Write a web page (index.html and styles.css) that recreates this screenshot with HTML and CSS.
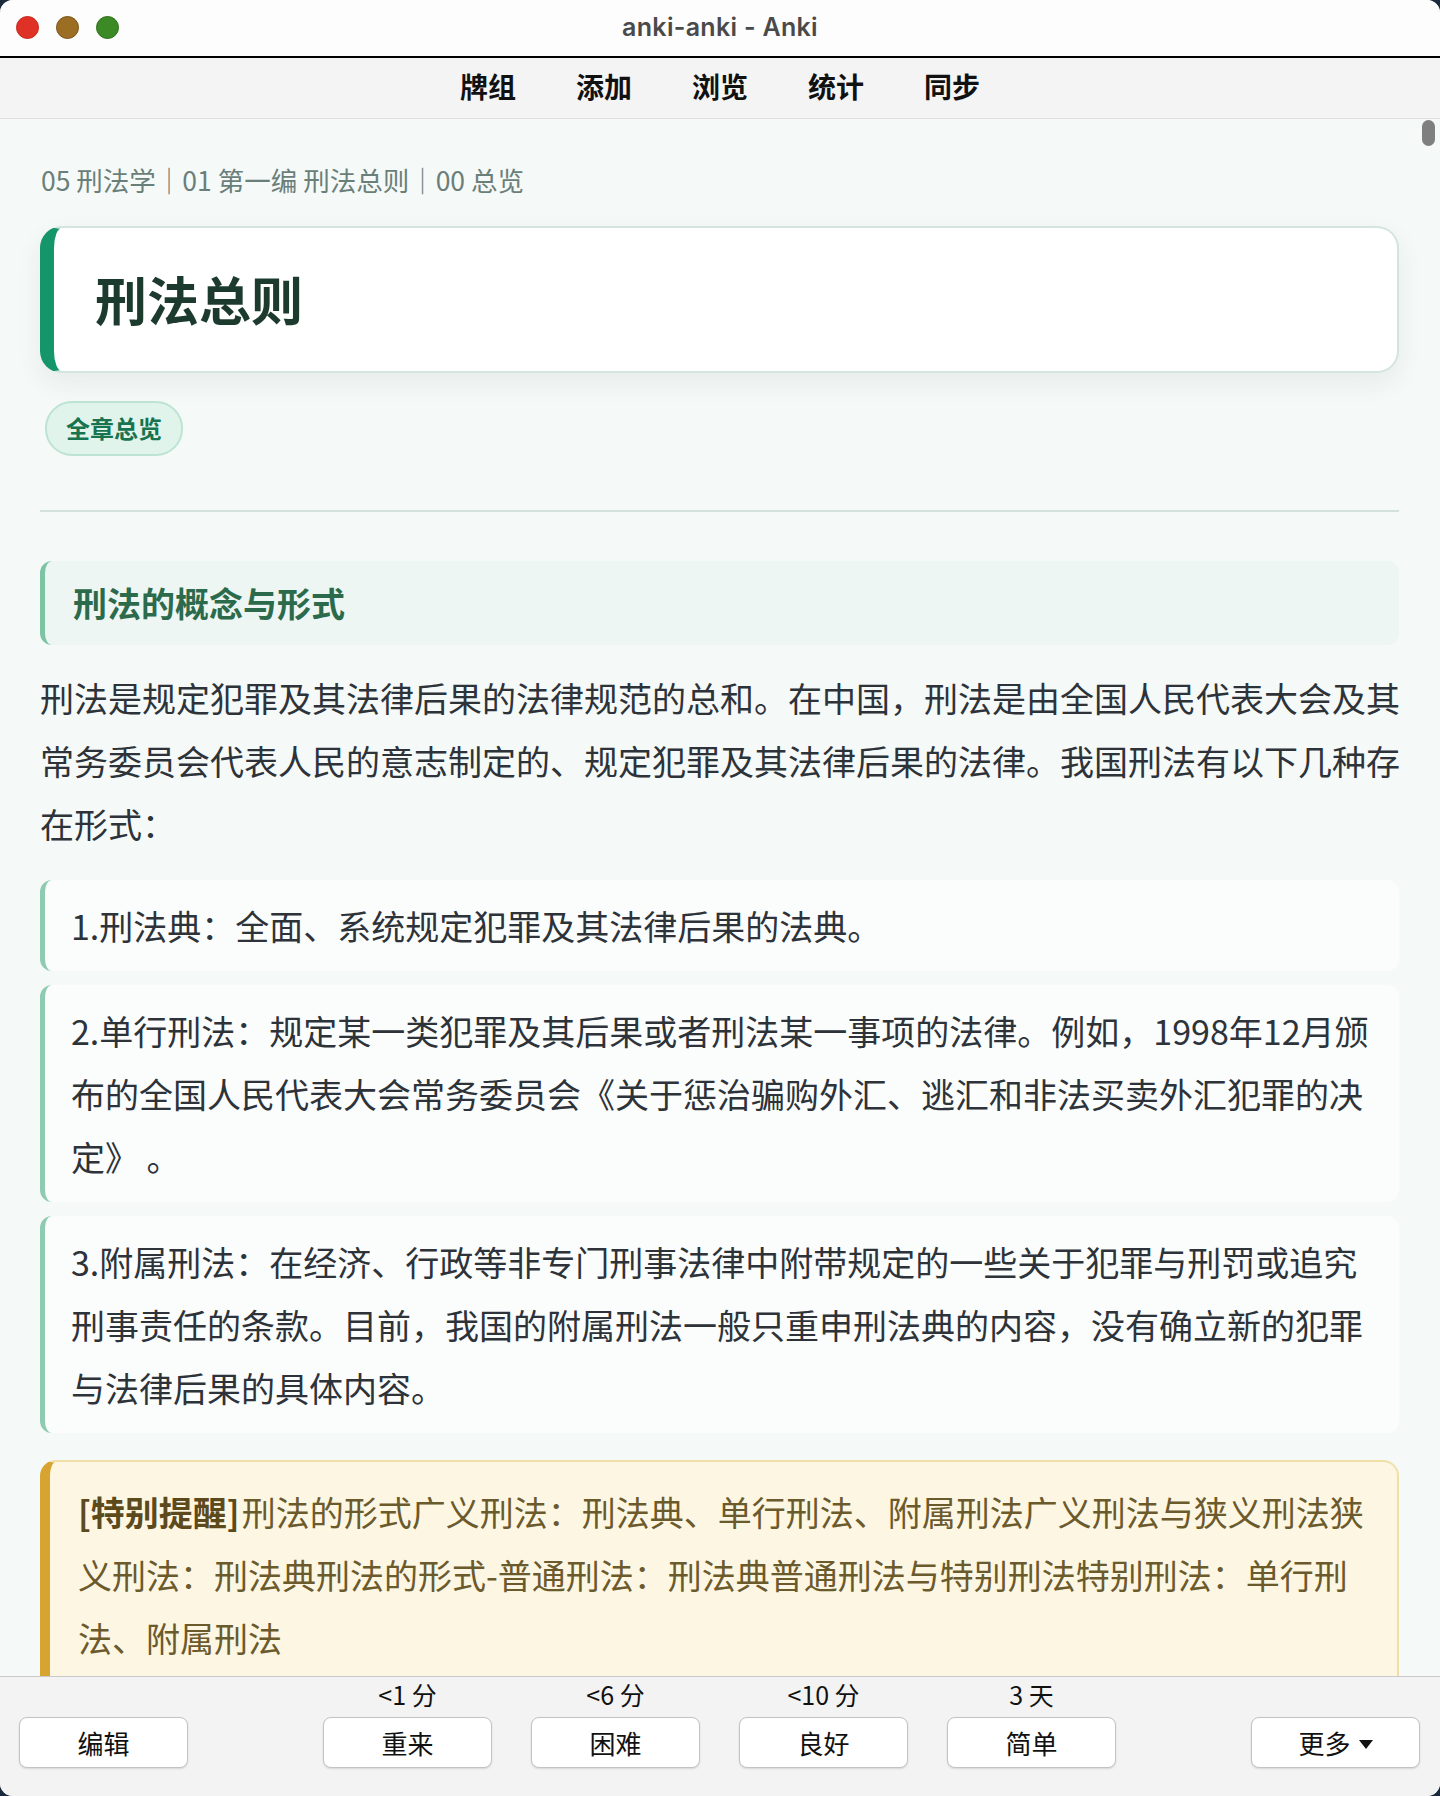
FILE: index.html
```html
<!DOCTYPE html>
<html lang="zh-CN">
<head>
    <meta charset="UTF-8">
    <meta name="viewport" content="width=device-width, initial-scale=1.0">
    <title>anki-anki - Anki</title>
    <link rel="stylesheet" href="styles.css">
</head>
<body>
    <div class="window">
        <header class="titlebar">
            <div class="lights">
                <span class="light red"></span>
                <span class="light yellow"></span>
                <span class="light green"></span>
            </div>
            <div class="wintitle">anki-anki - Anki</div>
            <div></div>
        </header>

        <nav class="toolbar">
            <a href="#">牌组</a>
            <a href="#">添加</a>
            <a href="#">浏览</a>
            <a href="#">统计</a>
            <a href="#">同步</a>
        </nav>

        <main class="reviewer">
            <div class="card">
                <div class="crumbs">05 刑法学｜01 第一编 刑法总则｜00 总览</div>

                <div class="title-card">
                    <h1>刑法总则</h1>
                </div>

                <div class="tags">
                    <span class="tag">全章总览</span>
                </div>

                <hr class="divider">

                <h2 class="section-title">刑法的概念与形式</h2>

                <p class="intro">刑法是规定犯罪及其法律后果的法律规范的总和。在中国，刑法是由全国人民代表大会及其常务委员会代表人民的意志制定的、规定犯罪及其法律后果的法律。我国刑法有以下几种存在形式：</p>

                <div class="point">
                    <p>1.刑法典：全面、系统规定犯罪及其法律后果的法典。</p>
                </div>
                <div class="point">
                    <p>2.单行刑法：规定某一类犯罪及其后果或者刑法某一事项的法律。例如，1998年12月颁布的全国人民代表大会常务委员会《关于惩治骗购外汇、逃汇和非法买卖外汇犯罪的决定》 。</p>
                </div>
                <div class="point">
                    <p>3.附属刑法：在经济、行政等非专门刑事法律中附带规定的一些关于犯罪与刑罚或追究刑事责任的条款。目前，我国的附属刑法一般只重申刑法典的内容，没有确立新的犯罪与法律后果的具体内容。</p>
                </div>

                <div class="tip">
                    <p><b>[特别提醒]</b>刑法的形式广义刑法：刑法典、单行刑法、附属刑法广义刑法与狭义刑法狭义刑法：刑法典刑法的形式-普通刑法：刑法典普通刑法与特别刑法特别刑法：单行刑法、附属刑法</p>
                </div>
            </div>
            <div class="scroll-thumb"></div>
        </main>

        <footer class="answer-bar">
            <div class="bar-left">
                <button class="btn">编辑</button>
            </div>
            <div class="answers">
                <div class="answer">
                    <span class="due">&lt;1 分</span>
                    <button class="btn">重来</button>
                </div>
                <div class="answer">
                    <span class="due">&lt;6 分</span>
                    <button class="btn">困难</button>
                </div>
                <div class="answer">
                    <span class="due">&lt;10 分</span>
                    <button class="btn">良好</button>
                </div>
                <div class="answer">
                    <span class="due">3 天</span>
                    <button class="btn">简单</button>
                </div>
            </div>
            <div class="bar-right">
                <button class="btn">更多
                    <svg class="caret" width="14" height="9" viewBox="0 0 14 9"><path d="M0 0h14L7 9z" fill="#111"/></svg>
                </button>
            </div>
        </footer>
    </div>
</body>
</html>
```

FILE: styles.css
```css
* {
    box-sizing: border-box;
}
html, body {
    margin: 0;
    padding: 0;
    background-color: #1b2b3d;
}
body {
    font-family: "Noto Sans CJK SC", "Noto Sans", sans-serif;
    color: #2d3339;
}
.window {
    width: 1440px;
    height: 1796px;
    display: flex;
    flex-direction: column;
    border-radius: 13px;
    overflow: hidden;
    background-color: #f5f9f8;
    box-shadow: inset 1px 0 0 #9a9a9a;
}

/* title bar */
.titlebar {
    height: 58px;
    flex-shrink: 0;
    display: grid;
    grid-template-columns: 1fr auto 1fr;
    align-items: center;
    background-color: #fdfdfd;
    border-bottom: 2px solid #000;
}
.lights {
    display: flex;
    gap: 17px;
    padding-left: 16px;
    padding-bottom: 2px;
}
.light {
    width: 23px;
    height: 23px;
    border-radius: 50%;
    border: 1px solid;
}
.light.red {
    background-color: #df3126;
    border-color: #c42a20;
}
.light.yellow {
    background-color: #9b6e24;
    border-color: #7a5418;
}
.light.green {
    background-color: #3c8a25;
    border-color: #2d6f1a;
}
.wintitle {
    font-family: Inter, "Liberation Sans", sans-serif;
    font-weight: 600;
    font-size: 25px;
    letter-spacing: 0.3px;
    color: #4a4a4a;
    padding-bottom: 2px;
}

/* toolbar */
.toolbar {
    height: 61px;
    flex-shrink: 0;
    display: flex;
    justify-content: center;
    align-items: center;
    gap: 60px;
    background-color: #f4f4f4;
    border-bottom: 1px solid #dedede;
    padding-bottom: 4px;
}
.toolbar a {
    color: #111;
    text-decoration: none;
    font-weight: 700;
    font-size: 28px;
}

/* card area */
.reviewer {
    flex: 1;
    position: relative;
    overflow: hidden;
    background-color: #f5f9f8;
}
.card {
    padding: 42px 41px 0 40px;
}
.crumbs {
    font-size: 26.5px;
    line-height: 38px;
    color: #6a7f79;
    padding-left: 1px;
}
.title-card {
    margin-top: 27px;
    background-color: #fff;
    border: 2px solid #d4e4de;
    border-left: 14px solid #15956a;
    border-radius: 22px;
    padding: 35px 41px 36px;
    box-shadow: 0 10px 26px rgba(40, 70, 60, 0.07);
}
.title-card h1 {
    margin: 0;
    font-size: 52px;
    line-height: 72px;
    font-weight: 700;
    color: #1d3a2e;
}
.tags {
    margin-top: 28px;
    padding-left: 5px;
    display: flex;
}
.tag {
    display: inline-block;
    padding: 7px 19px 8px;
    font-size: 24px;
    line-height: 36px;
    font-weight: 700;
    color: #18734f;
    background-color: #e0f4ec;
    border: 2px solid #bde3d3;
    border-radius: 27px;
}
.divider {
    margin: 54px 0 0;
    border: none;
    height: 2px;
    background-color: #d3e0db;
}
.section-title {
    margin: 49px 0 0;
    padding: 17px 28px;
    font-size: 34px;
    line-height: 50px;
    font-weight: 700;
    color: #2c6a4c;
    background-color: #edf6f2;
    border-left: 5px solid #7cc4a4;
    border-radius: 12px;
}
.intro {
    margin: 21px -4px 0 0;
    font-size: 34px;
    line-height: 63px;
}
.point {
    margin-top: 14px;
    padding: 14px 26px;
    background-color: #fbfdfd;
    border-left: 5px solid #8ecbb1;
    border-radius: 12px;
}
.intro + .point {
    margin-top: 25px;
}
.point p,
.tip p {
    margin: 0;
    font-size: 34px;
    line-height: 63px;
}
.tip {
    margin-top: 27px;
    padding: 18px 20px 22px 28px;
    background-color: #fdf6e3;
    border: 2px solid #f0dfa6;
    border-left: 10px solid #d7a431;
    border-radius: 16px;
    color: #6b5a2c;
}
.tip b {
    color: #5c4a1d;
    margin-right: 2px;
}
.scroll-thumb {
    position: absolute;
    top: 1px;
    right: 5px;
    width: 13px;
    height: 26px;
    border-radius: 7px;
    background-color: #7f7f7f;
}

/* answer bar */
.answer-bar {
    height: 120px;
    flex-shrink: 0;
    display: grid;
    grid-template-columns: 1fr auto 1fr;
    align-items: start;
    padding: 1px 20px 0 19px;
    background-color: #f3f3f3;
    border-top: 1px solid #c9c9c9;
}
.bar-left,
.bar-right {
    display: flex;
    padding-top: 39px;
}
.bar-right {
    justify-content: flex-end;
}
.answers {
    display: flex;
    gap: 39px;
}
.answer {
    display: flex;
    flex-direction: column;
    align-items: center;
    gap: 7px;
}
.due {
    font-size: 25px;
    line-height: 32px;
    color: #111;
}
.btn {
    width: 169px;
    height: 51px;
    font-family: "Noto Sans CJK SC", sans-serif;
    font-size: 26px;
    color: #111;
    background-color: #fff;
    border: 1px solid #c3c3c3;
    border-radius: 8px;
    box-shadow: 0 1px 2px rgba(0, 0, 0, 0.12);
    cursor: pointer;
    display: flex;
    align-items: center;
    justify-content: center;
    gap: 8px;
}
.caret {
    margin-top: 3px;
}
```
